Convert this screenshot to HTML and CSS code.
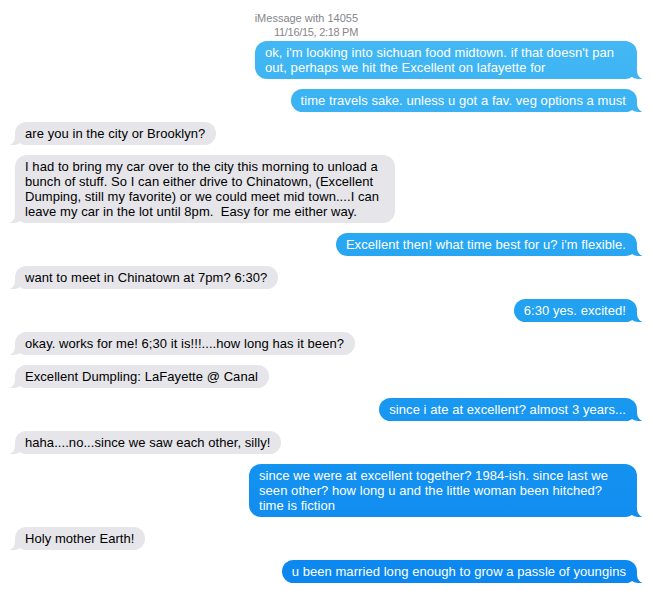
FILE: index.html
```html
<html>
    <head>
        <link rel="stylesheet" href="styles.css">
        <meta name="viewport" content="width=device-width, initial-scale=1.0">
        <title>iMessage with 14055</title>
    </head>
    <body>
        <div class="header">
            <div class="header-line">iMessage with 14055</div>
            <div class="header-line date">11/16/15, 2:18 PM</div>
        </div>
        <div class="thread">
            <div class="msg out wrap">ok, i'm looking into sichuan food midtown. if that doesn't pan<br>out, perhaps we hit the Excellent on lafayette for</div>
            <div class="msg out">time travels sake. unless u got a fav. veg options a must</div>
            <div class="msg in">are you in the city or Brooklyn?</div>
            <div class="msg in wrap">I had to bring my car over to the city this morning to unload a<br>bunch of stuff. So I can either drive to Chinatown, (Excellent<br>Dumping, still my favorite) or we could meet mid town....I can<br>leave my car in the lot until 8pm.&nbsp; Easy for me either way.</div>
            <div class="msg out">Excellent then! what time best for u? i'm flexible.</div>
            <div class="msg in">want to meet in Chinatown at 7pm? 6:30?</div>
            <div class="msg out">6:30 yes. excited!</div>
            <div class="msg in">okay. works for me! 6;30 it is!!!....how long has it been?</div>
            <div class="msg in">Excellent Dumpling: LaFayette @ Canal</div>
            <div class="msg out">since i ate at excellent? almost 3 years...</div>
            <div class="msg in">haha....no...since we saw each other, silly!</div>
            <div class="msg out wrap wide">since we were at excellent together? 1984-ish. since last we<br>seen other? how long u and the little woman been hitched?<br>time is fiction</div>
            <div class="msg in">Holy mother Earth!</div>
            <div class="msg out">u been married long enough to grow a passle of youngins</div>
        </div>
    </body>
</html>
```

FILE: styles.css
```css
html { padding: 0; }
body { font-family: "Liberation Sans", Helvetica, Arial, sans-serif; font-size: 13px; margin: 0; padding: 0; background: #fff; overflow: hidden; }

.header { margin: 11px 0 0 254px; width: 104px; white-space: nowrap; text-align: right; color: #86868a; font-size: 11px; line-height: 14px; }
.header-line { height: 14px; }
.date { letter-spacing: -0.3px; }

.thread { display: flex; flex-direction: column; gap: 10px; padding: 2px 15px 20px 15px; }

.msg {
    position: relative;
    padding: 4px 11px 4px 10px;
    line-height: 15px;
    letter-spacing: 0.06px;
    white-space: nowrap;
    border-radius: 12px;
}

.in.wrap { width: 359px; }
.out.wrap { width: 361px; }
.out.wrap.wide { width: 367px; }

.in { align-self: flex-start; background: #e5e5ea; color: #000; }
.out {
    align-self: flex-end;
    color: #fff;
    background: linear-gradient(to bottom, #48bbf4 0px, #22a2f1 300px, #0a86ef 591px) fixed;
}

/* little tails at the bottom corner */
.msg::before, .msg::after { content: ""; position: absolute; bottom: 0; height: 10px; }
.out::before { right: -5px; width: 14px; background: inherit; border-bottom-left-radius: 10px 9px; }
.out::after { right: -12px; width: 12px; background: #fff; border-bottom-left-radius: 7px 8px; }
.in::before { left: -5px; width: 14px; background: #e5e5ea; border-bottom-right-radius: 10px 9px; }
.in::after { left: -12px; width: 12px; background: #fff; border-bottom-right-radius: 7px 8px; }
```
